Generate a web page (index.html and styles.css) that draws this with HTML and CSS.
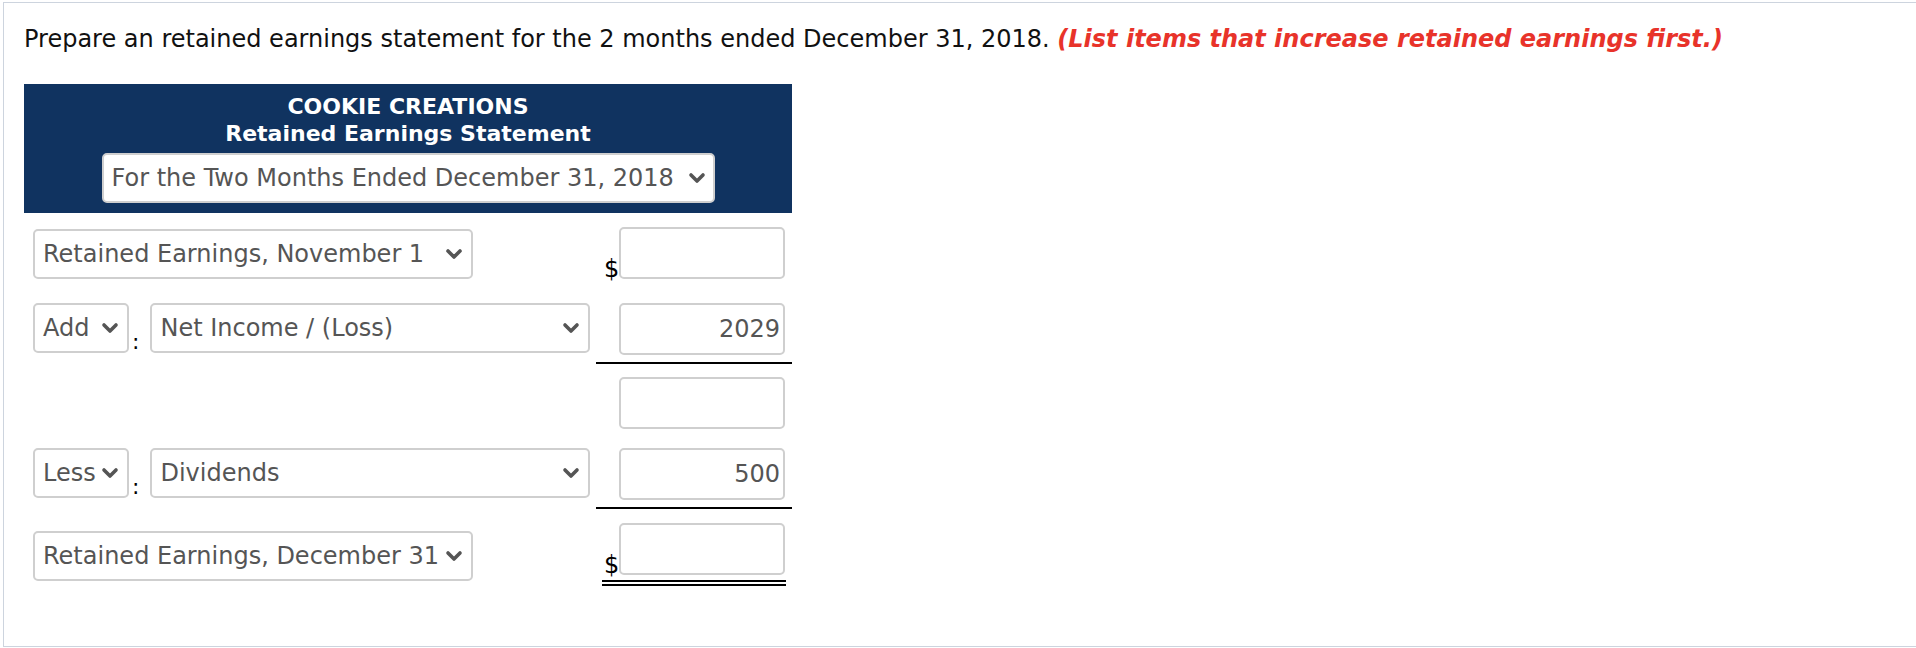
FILE: index.html
```html
<!DOCTYPE html>
<html lang="en">
<head>
<meta charset="utf-8">
<title>Retained Earnings Statement</title>
<link rel="stylesheet" href="styles.css">
</head>
<body>
<div class="frame">
  <p class="prompt">Prepare an retained earnings statement for the 2 months ended December 31, 2018. <em class="hint">(List items that increase retained earnings first.)</em></p>

  <div class="sheet">
    <div class="head">
      <div class="title">COOKIE CREATIONS</div>
      <div class="title">Retained Earnings Statement</div>
      <div class="sel sel-date"><span class="sel-text">For the Two Months Ended December 31, 2018</span><svg class="chev" viewBox="0 0 18 12" width="18" height="12"><polyline points="3,3 9,9 15,3"/></svg></div>
    </div>

    <div class="row row-open">
      <div class="sel sel-wide"><span class="sel-text">Retained Earnings, November 1</span><svg class="chev" viewBox="0 0 18 12" width="18" height="12"><polyline points="3,3 9,9 15,3"/></svg></div>
      <div class="amt"><span class="dollar">$</span><div class="inp"></div></div>
    </div>

    <div class="row row-add">
      <div class="pair">
        <div class="sel sel-op"><span class="sel-text">Add</span><svg class="chev" viewBox="0 0 18 12" width="18" height="12"><polyline points="3,3 9,9 15,3"/></svg></div>
        <span class="colon">:</span>
        <div class="sel sel-wide"><span class="sel-text">Net Income / (Loss)</span><svg class="chev" viewBox="0 0 18 12" width="18" height="12"><polyline points="3,3 9,9 15,3"/></svg></div>
      </div>
      <div class="amt amt-line"><span class="dollar"></span><div class="inp">2029</div></div>
    </div>

    <div class="row row-sub">
      <div class="pair"></div>
      <div class="amt"><span class="dollar"></span><div class="inp"></div></div>
    </div>

    <div class="row row-less">
      <div class="pair">
        <div class="sel sel-op"><span class="sel-text">Less</span><svg class="chev" viewBox="0 0 18 12" width="18" height="12"><polyline points="3,3 9,9 15,3"/></svg></div>
        <span class="colon">:</span>
        <div class="sel sel-wide"><span class="sel-text">Dividends</span><svg class="chev" viewBox="0 0 18 12" width="18" height="12"><polyline points="3,3 9,9 15,3"/></svg></div>
      </div>
      <div class="amt amt-line"><span class="dollar"></span><div class="inp">500</div></div>
    </div>

    <div class="row row-close">
      <div class="sel sel-wide"><span class="sel-text">Retained Earnings, December 31</span><svg class="chev" viewBox="0 0 18 12" width="18" height="12"><polyline points="3,3 9,9 15,3"/></svg></div>
      <div class="amt"><div class="dbl"><span class="dollar">$</span><div class="inp"></div></div></div>
    </div>
  </div>
</div>
</body>
</html>
```
FILE: styles.css
```css
html, body {
  margin: 0;
  padding: 0;
  background: #ffffff;
}

body {
  font-family: "DejaVu Sans", Verdana, sans-serif;
  font-size: 24px;
  color: #000;
}

.frame {
  margin: 2px 0 0 3px;
  height: 645px;
  box-sizing: border-box;
  border: 1px solid #cdd4de;
  border-right: 0;
  padding: 24px 0 0 20px;
}

.prompt {
  margin: 0;
  line-height: 24px;
  color: #111;
  white-space: nowrap;
}

.hint {
  color: #e8332a;
  font-weight: bold;
  font-style: italic;
}

.sheet {
  width: 768px;
  margin-top: 33px;
}

.head {
  background: #103360;
  padding: 9px 0 10px;
  display: flex;
  flex-direction: column;
  align-items: center;
}

.title {
  color: #fff;
  font-weight: bold;
  font-size: 22px;
  line-height: 27px;
}

.sel {
  box-sizing: border-box;
  height: 50px;
  background: #fff;
  border: 2px solid #cfcfcf;
  border-radius: 5px;
  display: flex;
  align-items: center;
  justify-content: space-between;
  padding: 0 8px 0 8px;
  color: #555;
  white-space: nowrap;
}

.sel-date {
  margin-top: 6px;
  width: 613px;
  padding-right: 7px;
}

.sel-wide {
  width: 440px;
}

.sel-op {
  width: 96px;
}

.chev {
  flex: none;
  fill: none;
  stroke: #555;
  stroke-width: 3.6;
  stroke-linecap: round;
  stroke-linejoin: round;
}

.row {
  display: flex;
  justify-content: space-between;
  padding-left: 9px;
}

.row-open {
  margin-top: 14px;
  align-items: flex-end;
}

.row-add {
  margin-top: 24px;
  align-items: flex-start;
}

.row-sub {
  margin-top: 13px;
}

.row-less {
  margin-top: 19px;
  align-items: flex-start;
}

.row-close {
  margin-top: 14px;
  align-items: flex-start;
}

.row-close .sel {
  margin-top: 8px;
}

.pair {
  display: flex;
  align-items: flex-end;
}

.colon {
  color: #000;
  font-size: 22px;
  line-height: 18px;
  margin: 0 11px 2px 3px;
}

.amt {
  width: 196px;
  box-sizing: border-box;
  padding: 0 6px;
  display: flex;
  align-items: flex-end;
}

.amt-line {
  border-bottom: 2px solid #000;
  padding-bottom: 7px;
}

.dbl {
  flex: 1;
  display: flex;
  align-items: flex-end;
  border-bottom: 6px double #000;
  padding-bottom: 5px;
}

.dollar {
  width: 17px;
  flex: none;
  line-height: 20px;
  padding-left: 2px;
  box-sizing: border-box;
  color: #000;
}

.inp {
  box-sizing: border-box;
  width: 166px;
  height: 52px;
  border: 2px solid #cfcfcf;
  border-radius: 5px;
  background: #fff;
  color: #555;
  text-align: right;
  padding: 0 3px;
  line-height: 48px;
}
```
